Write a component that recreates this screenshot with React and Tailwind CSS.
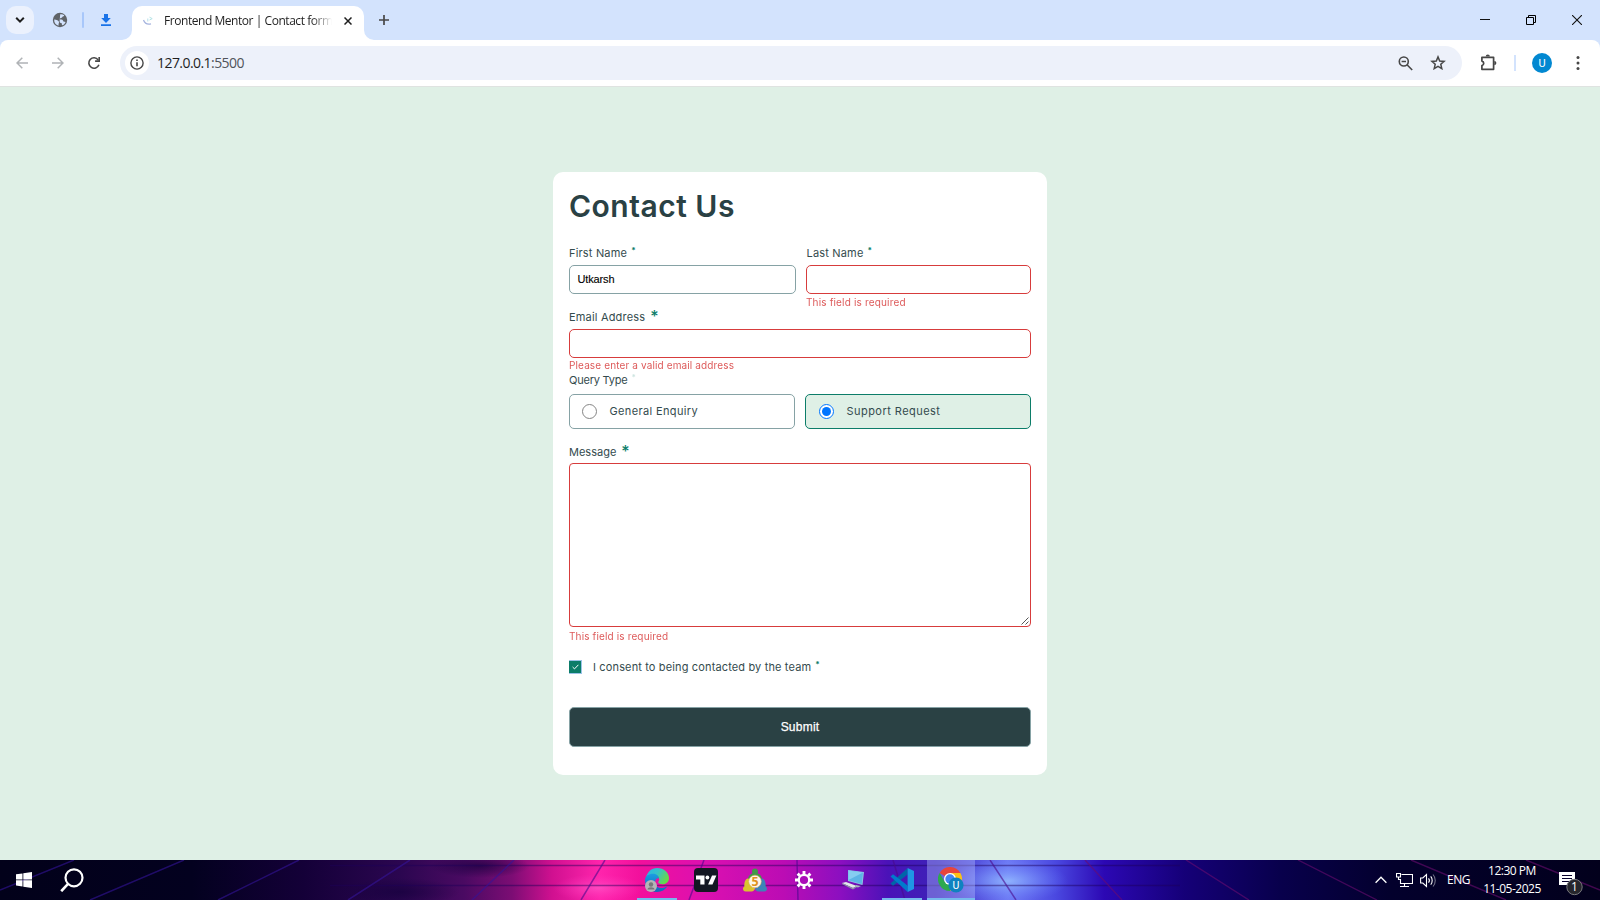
const ui = "font-['Open_Sans','Noto_Sans',sans-serif]";

function SmallStar({ className = "" }) {
  return <span className={"ml-[4px] text-[8px] font-bold leading-[11px] tracking-normal text-[#0c7d69] " + className}>*</span>;
}

function BigStar() {
  return <span className="-mt-[1px] ml-[5px] text-[16px] font-medium leading-4 tracking-normal text-[#0c7d69]">*</span>;
}

function TabStrip() {
  return (
    <div className="flex h-10 items-end bg-[#d3e3fd]">
      <div className="flex h-10 w-[122px] items-center pl-[6px]">
        <div className="flex size-7 items-center justify-center rounded-[10px] bg-[#ebf1fd]">
          <svg width="10" height="8" viewBox="0 0 10 8" fill="none" stroke="#1f1f1f" strokeWidth="2"><path d="M1.2 1.8 5 5.6l3.8-3.800" /></svg>
        </div>
        <svg className="ml-[18px]" width="16" height="16" viewBox="0 0 16 16">
          <circle cx="8" cy="8" r="7.2" fill="#5f6368" />
          <path d="M8.200 2.300c1.700-.2 3 .2 4 1-.2 1-.9 1.300-1.800 1.500-.3 1.100-1 1.300-2.300 1.500v1.200c1.800 0 3 .3 3.300 1.900 1 0 1.600.2 2.200.7-.6 1.500-1.600 2.600-3 3.200-.8-.3-.8-1.100-.8-2.100-1.400-.1-2.200-.6-2.200-1.700z" fill="#d3e3fd" />
          <path d="M2.200 7.600c2.300.1 4.600.9 4.800 2.500.1 1-.5 1.300-.5 3.700C3.600 13 2 10.700 2.200 7.600z" fill="#d3e3fd" />
        </svg>
        <div className="ml-[14px] h-4 w-[2px] rounded bg-[#a8c7fa]" />
        <svg className="ml-[16px]" width="12" height="14" viewBox="0 0 12 14" fill="#1a73e8">
          <path d="M4 1h4v4h2.800L6 10 1.200 5H4zM1 11.300h10v1.700H1z" />
        </svg>
      </div>
      <svg width="10" height="10" viewBox="0 0 10 10"><path d="M10 0v10H0A10 10 0 0 0 10 0z" fill="#fff" /></svg>
      <div className="flex h-[34px] w-[232px] items-center rounded-t-[10px] bg-white pb-[5px] pl-[11px]">
        <svg width="10" height="10" viewBox="0 0 10 10" fill="none">
          <path d="M.5 4C1.500 7 4 8.600 8 7.800" stroke="#a5b3de" strokeWidth="1.200" />
          <path d="M4.800 2.500v3" stroke="#b5e0ea" strokeWidth="1" />
          <path d="m6.500 1.200 2.700 1.400L6.500 4" stroke="#b3e3e6" strokeWidth="1" />
        </svg>
        <div className="ml-[11px] w-[168px] overflow-hidden whitespace-nowrap text-[12px] leading-5 tracking-[-0.45px] text-[#1f1f1f] [mask-image:linear-gradient(to_right,black_88%,transparent)]">
          <span className={ui}>Frontend Mentor | Contact form</span>
        </div>
        <svg className="ml-[12px]" width="8" height="8" viewBox="0 0 8 8" stroke="#1f1f1f" strokeWidth="1.500"><path d="m.5.5 7 7M7.500.5l-7 7" /></svg>
      </div>
      <svg width="10" height="10" viewBox="0 0 10 10"><path d="M0 0v10h10A10 10 0 0 1 0 0z" fill="#fff" /></svg>
      <div className="flex h-10 flex-1 items-center pl-[5px]">
        <svg width="10" height="10" viewBox="0 0 10 10" stroke="#474747" strokeWidth="1.700"><path d="M5 0v10M0 5h10" /></svg>
        <div className="flex-1" />
        <svg width="10" height="10" viewBox="0 0 10 10"><path d="M0 4h10v1H0z" fill="#111" /></svg>
        <svg className="ml-[36px]" width="10" height="10" viewBox="0 0 10 10" fill="none" stroke="#000"><path d="M.5 2.500h7v7h-7zM2.500 2.500v-2h7v7h-2" /></svg>
        <svg className="ml-[36px] mr-[18px]" width="10" height="10" viewBox="0 0 10 10" stroke="#111" strokeWidth="1.100"><path d="m0 0 10 10M10 0 0 10" /></svg>
      </div>
    </div>
  );
}

function Toolbar() {
  return (
    <div className="bg-[#d3e3fd]">
      <div className="flex h-[47px] items-center rounded-t-[8px] border-b border-[#dfe3e1] bg-white pl-4">
        <svg width="12" height="12" viewBox="0 0 12 12" fill="none" stroke="#b0b3b6" strokeWidth="1.500"><path d="M12 6H1M6.300.7 1 6l5.300 5.300" /></svg>
        <svg className="ml-[24px]" width="12" height="12" viewBox="0 0 12 12" fill="none" stroke="#b0b3b6" strokeWidth="1.500"><path d="M0 6h11M5.700.7 11 6l-5.300 5.300" /></svg>
        <svg className="ml-[23px]" width="14" height="14" viewBox="0 0 14 14" fill="none" stroke="#474747" strokeWidth="1.600">
          <path d="M11.900 8.800A5.200 5.200 0 1 1 11.200 3.900" /><path d="M12.200 1v4.100H8.100" />
        </svg>
        <div className="ml-[19px] flex h-[34px] w-[1342px] items-center rounded-full bg-[#edf1fa] pl-[5px]">
          <div className="flex size-6 items-center justify-center rounded-full bg-white">
            <svg width="14" height="14" viewBox="0 0 14 14" fill="none" stroke="#474747" strokeWidth="1.400"><circle cx="7" cy="7" r="6.100" /><path d="M7 6.300v4M7 3.500V5" strokeWidth="1.600" /></svg>
          </div>
          <div className={"ml-[8px] flex-1 text-[14px] leading-5 tracking-[-0.56px] text-[#1f1f1f] " + ui}>127.0.0.1<span className="text-[#50545a]">:5500</span></div>
          <svg width="15" height="15" viewBox="0 0 15 15" fill="none" stroke="#474747" strokeWidth="1.600"><circle cx="5.800" cy="5.500" r="4.500" /><path d="m9 8.800 5.200 5.200M3.600 5.500H8" /></svg>
          <svg className="-mt-px ml-[17px] mr-[16px]" width="16" height="15" viewBox="0 0 16 15" fill="none" stroke="#474747" strokeWidth="1.500"><path d="m8 1.900 1.700 4.100 4.400.4-3.300 2.900 1 4.300L8 11.300l-3.800 2.300 1-4.300L1.900 6.400l4.400-.4z" /></svg>
        </div>
        <svg className="-mt-[2px] ml-[18px]" width="17" height="17" viewBox="0 0 17 17" fill="none" stroke="#474747" strokeWidth="1.700">
          <path d="M1.900 3.300h11.700v12H1.900v-3.700a2.300 2.300 0 0 0 0-4.500z" strokeLinejoin="round" />
          <path d="M5.700 2.600a2.100 2.100 0 0 1 4.200 0zM14.300 7a2.100 2.100 0 0 1 0 4.200z" fill="#474747" stroke="none" />
        </svg>
        <div className="ml-[17px] h-4 w-[2px] bg-[#d3e3fd]" />
        <div className="ml-[16px] flex size-5 items-center justify-center rounded-full bg-[#0288d1] font-['Roboto',sans-serif] text-[11px] leading-none text-white">U</div>
        <svg className="ml-[24px]" width="4" height="14" viewBox="0 0 4 14" fill="#474747"><circle cx="2" cy="1.500" r="1.500" /><circle cx="2" cy="7" r="1.500" /><circle cx="2" cy="12.500" r="1.500" /></svg>
      </div>
    </div>
  );
}

function Form() {
  return (
    <main className="flex h-[773px] justify-center bg-[#dff0e6] pt-[85px]">
      <form className="flex h-[603px] w-[494px] flex-col rounded-[10px] bg-white px-4 pt-4 font-['Inter',sans-serif] text-[11px] leading-4 text-[#344b4e]">
        <h1 className="text-[30px] font-semibold leading-9 tracking-[0.5px] text-[#2a4144]">Contact Us</h1>
        <div className="mt-[21px] flex gap-[10px]">
          <div className="w-[227px]">
            <div className="flex h-4 items-start tracking-[0.18px]">First Name<SmallStar /></div>
            <div className="mt-1 flex h-[29px] items-center rounded-[5px] border border-[#86a2a5] pb-px pl-[7.5px] font-['Liberation_Sans',sans-serif] text-[11px] tracking-[-0.15px] text-black [-webkit-text-stroke:0.12px_black]">Utkarsh</div>
          </div>
          <div className="w-[225px]">
            <div className="flex h-4 items-start pl-[0.5px] tracking-[0.18px]">Last Name<SmallStar /></div>
            <div className="mt-1 h-[29px] rounded-[5px] border border-[#d73c3c]" />
            <div className="mt-px h-[14px] text-[10px] leading-[14px] tracking-[0.16px] text-[#d73c3c] opacity-85">This field is required</div>
          </div>
        </div>
        <div className="flex h-4 items-start tracking-[0.18px]">Email Address<BigStar /></div>
        <div className="mt-1 h-[29px] rounded-[5px] border border-[#d73c3c]" />
        <div className="h-[14px] text-[10px] leading-[14px] tracking-[0.13px] text-[#d73c3c] opacity-85">Please enter a valid email address</div>
        <div className="flex h-4 items-start tracking-[-0.22px]">Query Type<SmallStar className="opacity-20" /></div>
        <div className="mt-[6px] flex gap-[10px]">
          <div className="flex h-[35px] w-[226px] items-center rounded-[5px] border border-[#86a2a5] pl-[12px]">
            <div className="size-[15px] rounded-full border border-[#858585]" />
            <div className="ml-[12.5px] pb-px tracking-[0.36px]">General Enquiry</div>
          </div>
          <div className="flex h-[35px] w-[226px] items-center rounded-[5px] border border-[#0c7d69] bg-[#dff0e6] pl-[13px]">
            <div className="flex size-[15px] items-center justify-center rounded-full border border-[#0075ff] bg-white"><div className="size-[9px] rounded-full bg-[#0075ff]" /></div>
            <div className="ml-[12.5px] pb-px tracking-[0.46px]">Support Request</div>
          </div>
        </div>
        <div className="mt-[15px] flex h-4 items-start">Message<BigStar /></div>
        <div className="mt-[3px] flex h-[164px] items-end justify-end rounded-[4px] border border-[#d73c3c] pr-[1px] pb-[1px]">
          <svg width="8" height="8" viewBox="0 0 8 8" stroke="#555" strokeWidth="1"><path d="M.5 7.500l7-7M4.500 7.500l3-3" /></svg>
        </div>
        <div className="mt-[2px] h-[14px] text-[10px] leading-[14px] tracking-[0.14px] text-[#d73c3c] opacity-85">This field is required</div>
        <div className="mt-4 flex h-4 items-start">
          <div className="mt-[1px] flex h-[14px] w-[13px] items-center justify-center border-t border-r border-b border-[#9cc3e8] bg-[#0c7d69]">
            <svg width="7" height="6" viewBox="0 0 7 6" fill="none" stroke="#fff" strokeWidth="1"><path d="m.6 3 1.900 1.900L6.400.8" /></svg>
          </div>
          <span className="ml-[11px] tracking-[0.14px]">I consent to being contacted by the team</span><SmallStar />
        </div>
        <div className="mt-8 flex h-10 items-center justify-center rounded-[5px] border border-[#86a2a5] bg-[#2a4144] font-['Liberation_Sans',sans-serif] text-[12px] tracking-[0.23px] text-white [-webkit-text-stroke:0.25px_white]">Submit</div>
      </form>
    </main>
  );
}

function Wallpaper() {
  return (
    <svg className="absolute inset-0" width="1600" height="40" viewBox="0 0 1600 40" preserveAspectRatio="none">
      <defs>
        <linearGradient id="wp">
          <stop offset="0" stopColor="#02011a" /><stop offset=".12" stopColor="#03011f" /><stop offset=".19" stopColor="#140038" />
          <stop offset=".25" stopColor="#2b0650" /><stop offset=".29" stopColor="#4a0a62" /><stop offset=".32" stopColor="#7c0d74" />
          <stop offset=".345" stopColor="#d01090" /><stop offset=".375" stopColor="#ff24ac" /><stop offset=".4" stopColor="#f2109c" />
          <stop offset=".44" stopColor="#dc10b0" /><stop offset=".49" stopColor="#bb0cb4" /><stop offset=".525" stopColor="#8c0fc0" />
          <stop offset=".555" stopColor="#4a12b8" /><stop offset=".585" stopColor="#3d22b8" /><stop offset=".61" stopColor="#5350dc" />
          <stop offset=".63" stopColor="#6e7af4" /><stop offset=".66" stopColor="#4a48e0" /><stop offset=".69" stopColor="#2c08b4" />
          <stop offset=".74" stopColor="#150078" /><stop offset=".8" stopColor="#08004c" /><stop offset=".87" stopColor="#03002c" /><stop offset="1" stopColor="#02001c" />
        </linearGradient>
        <radialGradient id="glow"><stop offset="0" stopColor="#94bcff" stopOpacity=".85" /><stop offset="1" stopColor="#6a80ff" stopOpacity="0" /></radialGradient>
        <radialGradient id="dark"><stop offset="0" stopColor="#14003c" stopOpacity=".65" /><stop offset="1" stopColor="#14003c" stopOpacity="0" /></radialGradient>
        <radialGradient id="pink"><stop offset="0" stopColor="#ff50c4" stopOpacity=".8" /><stop offset="1" stopColor="#ff30b8" stopOpacity="0" /></radialGradient>
      </defs>
      <path d="M0 0h1600v40H0z" fill="url(#wp)" />
      <ellipse cx="1008" cy="21" rx="60" ry="22" fill="url(#glow)" />
      <ellipse cx="480" cy="6" rx="50" ry="12" fill="url(#dark)" />
      <ellipse cx="400" cy="32" rx="60" ry="14" fill="url(#dark)" />
      <ellipse cx="598" cy="28" rx="45" ry="14" fill="url(#pink)" />
      <path d="M330 5.500h850M330 25.500h850" stroke="#1c0058" strokeOpacity=".45" strokeWidth="1.300" />
      <path d="M74 0 0 30M184 0 90 40M299 0l-81 40M410 0l-62 40M514 0l-42 40" stroke="#34149a" strokeOpacity=".6" strokeWidth="1.500" />
      <path d="M605 0l-24 40M704 0l-15 40M797 0l1 40M893 0l12 40M990 0l26 40" stroke="#4a0a8c" strokeOpacity=".6" strokeWidth="1.500" />
      <path d="m1085 0 37 40M1186 0l63 40M1298 0l79 40M1411 0l95 40M1526 0l74 30" stroke="#6a0c70" strokeOpacity=".6" strokeWidth="1.400" />
    </svg>
  );
}

function EdgeIcon() {
  return (
    <svg width="24" height="24" viewBox="0 0 24 24">
      <defs>
        <linearGradient id="eg" x1="0" y1="0" x2="1" y2=".5"><stop offset="0" stopColor="#27b5e8" /><stop offset=".5" stopColor="#35c1c9" /><stop offset="1" stopColor="#66d84a" /></linearGradient>
        <linearGradient id="eb" x1="0" y1="0" x2="0" y2="1"><stop offset="0" stopColor="#1b9de2" /><stop offset="1" stopColor="#1466b8" /></linearGradient>
      </defs>
      <path d="M1 10C2 4 6.500 0 12 0c7 0 12 4.800 12 10 0 4-3 6.300-6.500 6.300-3 0-4.300-1.200-4.300-2 0-.6 1-1 1-2.800C14.200 9 12 6.500 8.500 6.500 5 6.500 2.300 8 1 10z" fill="url(#eg)" />
      <path d="M0 12c0-4 4-6.200 8-6.200 3 0 5.800 2 6.100 4.600C12.500 9.500 10 11 10 14.500c0 4 4 6 7.500 5.500 2-.2 3.500-1 4.800-1.700C20.500 21.800 16.500 24 12 24 5 24 0 19 0 12z" fill="url(#eb)" />
      <circle cx="6" cy="18" r="6" fill="#b5b5b8" /><circle cx="6" cy="16.500" r="2.200" fill="#77777a" /><path d="M2.500 21.500c0-3 7-3 7 0z" fill="#77777a" />
    </svg>
  );
}

function TradingIcon() {
  return (
    <svg width="24" height="24" viewBox="0 0 24 24">
      <rect width="24" height="24" rx="4" fill="#131722" />
      <path d="M2 7.500h8.500v9H6.300v-5H2z" fill="#fff" /><circle cx="13.400" cy="9.500" r="1.900" fill="#fff" /><path d="M18 7.500h4.400l-3.900 9h-4.400z" fill="#fff" />
    </svg>
  );
}

function MetaIcon() {
  return (
    <svg width="24" height="24" viewBox="0 0 24 24">
      <path d="M12 .5c1.900 0 3 1.300 3 3 0 .7-.2 1.200-.5 1.700C17.300 6 19 8.500 19 12H5c0-3.500 1.700-6 4.500-6.800C9.200 4.700 9 4.200 9 3.500c0-1.700 1.100-3 3-3z" fill="#3f9a48" />
      <path d="M5 10.500c1.600 0 2.700 1 3 2.300C11 14 12.500 17 12 20c-.3 2.300-1.500 3.500-3.500 3.500H2.600C1 23.500 0 22.300 0 20.800c0-1 .5-1.900 1.400-2.300-.3-3 .3-7.500 3.600-8z" fill="#d9c32e" />
      <path d="M19 10.500c-1.600 0-2.700 1-3 2.300C13 14 11.500 17 12 20c.3 2.300 1.500 3.500 3.500 3.500h5.900c1.600 0 2.600-1.200 2.600-2.700 0-1-.5-1.900-1.400-2.300.3-3-.3-7.500-3.600-8z" fill="#3d83b8" />
      <circle cx="12" cy="13.500" r="6.300" fill="#fdf7ea" stroke="#d8a860" strokeWidth=".6" />
      <text x="12" y="18" textAnchor="middle" fontSize="12.500" fontWeight="700" fontFamily="Open Sans" fill="#e0931e">5</text>
    </svg>
  );
}

function GearIcon() {
  return (
    <svg width="18" height="18" viewBox="-9 -9 18 18" fill="none" stroke="#fff">
      <circle r="5.200" strokeWidth="2.200" />
      <path d="M0-9v3M0 6v3M-9 0h3M6 0h3M-6.360-6.360l2.100 2.100M4.260 4.260l2.100 2.100M-6.360 6.360l2.100-2.100M4.260-4.260l2.100-2.100" strokeWidth="2.900" />
    </svg>
  );
}

function ComputerIcon() {
  return (
    <svg width="22" height="22" viewBox="0 0 22 22">
      <path d="m6 1 16 2-1.500 13L6 12z" fill="#8fc4e4" /><path d="m6.500 1.600 14.500 2-1.300 11.400L6.500 11.300z" fill="#5db4e6" /><path d="m6.500 1.600 14.500 2L6.500 11z" fill="#86cdf1" />
      <path d="m0 14 4-1 11 4-4 2z" fill="#e2e6ea" /><path d="m11 19 4-2v1l-4 2.500L0 15v-1z" fill="#8b98a5" /><path d="m14 16 5 1-3 1.500-3-1z" fill="#a8b4be" />
    </svg>
  );
}

function CodeIcon() {
  return (
    <svg width="24" height="24" viewBox="0 0 24 24">
      <path d="M.5 15.600 17.600 0v6.600L3 17.800z" fill="#0065a9" /><path d="M.5 8.400 17.600 24v-6.600L3 6.200z" fill="#007acc" /><path d="M17.600 0 24 3v18l-6.400 3z" fill="#1f96e4" />
    </svg>
  );
}

function ChromeIcon() {
  return (
    <svg width="26" height="26" viewBox="0 0 26 26">
      <path d="M12 12 1.600 6A12 12 0 0 1 22.400 6z" fill="#e8453c" />
      <path d="M12 12V6h10.400A12 12 0 0 1 12 24l5.200-9z" fill="#fbc116" />
      <path d="m12 12 5.200 3L12 24A12 12 0 0 1 1.600 6l5.200 9z" fill="#2da94f" />
      <circle cx="12" cy="12" r="6" fill="#fff" /><circle cx="12" cy="12" r="4.700" fill="#4285f4" />
      <circle cx="18" cy="18" r="7.600" fill="#0f82c0" />
      <text x="18" y="22" textAnchor="middle" fontSize="10.500" fontFamily="Roboto" fill="#fff">U</text>
    </svg>
  );
}

function AppSlot({ running, active, children }) {
  return (
    <div className={"flex h-10 w-12 flex-col items-center " + (active ? "bg-[#b5c0ff]/40" : "")}>
      <div className="flex h-[38px] items-center pt-[2px]">{children}</div>
      {running && <div className={"h-[2px] bg-[#76b9ed] " + (active ? "w-12" : "w-10")} />}
    </div>
  );
}

function Taskbar() {
  return (
    <footer className="relative h-10 overflow-hidden bg-[#02011a]">
      <Wallpaper />
      <div className="relative flex h-10 items-center text-white">
        <svg className="ml-4" width="16" height="16" viewBox="0 0 16 16" fill="#fff"><path d="M0 2.300 6.500 1.400v6.100H0zM7.300 1.300 16 0v7.500H7.300zM0 8.300h6.500v6.200L0 13.600zM7.300 8.300H16V16l-8.700-1.300z" /></svg>
        <svg className="ml-[28px]" width="24" height="24" viewBox="0 0 24 24" fill="none" stroke="#fff" strokeWidth="2.200"><circle cx="14" cy="9.800" r="8.500" /><path d="M8.300 15.700 1.200 23.200" strokeWidth="2.600" /></svg>
        <div className="ml-[549px] flex gap-px">
          <AppSlot running><EdgeIcon /></AppSlot>
          <AppSlot><TradingIcon /></AppSlot>
          <AppSlot><MetaIcon /></AppSlot>
          <AppSlot><GearIcon /></AppSlot>
          <AppSlot><ComputerIcon /></AppSlot>
          <AppSlot running><CodeIcon /></AppSlot>
          <AppSlot running active><ChromeIcon /></AppSlot>
        </div>
        <div className={"ml-[400px] flex items-center text-[12px] " + ui}>
          <svg width="12" height="8" viewBox="0 0 12 8" fill="none" stroke="#fff" strokeWidth="1.300"><path d="m.6 6.800 5.400-5.500 5.400 5.500" /></svg>
          <svg className="ml-[9px]" width="17" height="15" viewBox="0 0 17 15" fill="none" stroke="#fff" strokeWidth="1.100"><path d="M5.500 1.500h11v9h-12V6M8.500 10.500v3M4 13.500h9M.5.500h4v3.500h-4zM2.500 4v2.500h2" /></svg>
          <svg className="ml-[7px]" width="17" height="15" viewBox="0 0 17 15" fill="none" stroke="#fff" strokeWidth="1.100"><path d="M.6 5h2.200l3.700-3.500v12L2.800 10H.6zM8.500 5.300c1 1.200 1 3.200 0 4.400M10.700 3.400c2 2.200 2 6 0 8.200" /><path d="M13 1.500c3 3.300 3 8.700 0 12" opacity=".45" /></svg>
          <span className="ml-[10px] tracking-[-0.5px]">ENG</span>
          <div className="ml-[12px] w-[60px] text-center leading-[18px]">
            <div className="tracking-[-0.5px]">12:30 PM</div>
            <div className="tracking-[-0.5px]">11-05-2025</div>
          </div>
          <svg className="ml-[16px] mt-[8px]" width="26" height="27" viewBox="0 0 26 27">
            <path d="M1 1h16v13h-5l-3 3v-3H1z" fill="#fff" /><path d="M4 4.500h10M4 7.500h10M4 10.500h7" stroke="#08002c" strokeWidth="1.200" />
            <circle cx="16.500" cy="16" r="7.700" fill="#26262c" stroke="#77777c" />
            <text x="16.500" y="20.300" textAnchor="middle" fontSize="12" fontFamily="Open Sans" fill="#fff">1</text>
          </svg>
        </div>
      </div>
    </footer>
  );
}

export default function App() {
  return (
    <div className="h-[900px] w-[1600px] overflow-hidden bg-[#dff0e6]">
      <TabStrip />
      <Toolbar />
      <Form />
      <Taskbar />
    </div>
  );
}
